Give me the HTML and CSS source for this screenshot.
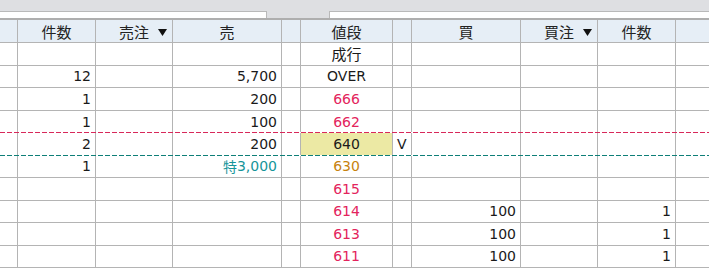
FILE: index.html
```html
<!DOCTYPE html>
<html lang="ja">
<head>
    <meta charset="UTF-8">
    <title>板</title>
    <link rel="stylesheet" href="styles.css">
</head>
<body>
    <div class="toolbar">
        <div class="field field-left"></div>
        <div class="field field-right"></div>
    </div>

    <div class="board">
        <div class="row head">
            <div class="cell"></div>
            <div class="cell center"><span class="jp">件数</span></div>
            <div class="cell center sort"><span class="jp">売注</span><svg class="arrow" width="9" height="7" viewBox="0 0 9 7"><path d="M0 0H9L4.5 7Z" fill="#111"/></svg></div>
            <div class="cell center"><span class="jp">売</span></div>
            <div class="cell"></div>
            <div class="cell center"><span class="jp">値段</span></div>
            <div class="cell"></div>
            <div class="cell center"><span class="jp">買</span></div>
            <div class="cell center sort"><span class="jp">買注</span><svg class="arrow" width="9" height="7" viewBox="0 0 9 7"><path d="M0 0H9L4.5 7Z" fill="#111"/></svg></div>
            <div class="cell center"><span class="jp">件数</span></div>
            <div class="cell"></div>
        </div>

        <div class="row">
            <div class="cell"></div>
            <div class="cell"></div>
            <div class="cell"></div>
            <div class="cell"></div>
            <div class="cell"></div>
            <div class="cell center"><span class="jp">成行</span></div>
            <div class="cell"></div>
            <div class="cell"></div>
            <div class="cell"></div>
            <div class="cell"></div>
            <div class="cell"></div>
        </div>

        <div class="row">
            <div class="cell"></div>
            <div class="cell">12</div>
            <div class="cell"></div>
            <div class="cell">5,700</div>
            <div class="cell"></div>
            <div class="cell center">OVER</div>
            <div class="cell"></div>
            <div class="cell"></div>
            <div class="cell"></div>
            <div class="cell"></div>
            <div class="cell"></div>
        </div>

        <div class="row">
            <div class="cell"></div>
            <div class="cell">1</div>
            <div class="cell"></div>
            <div class="cell">200</div>
            <div class="cell"></div>
            <div class="cell center up">666</div>
            <div class="cell"></div>
            <div class="cell"></div>
            <div class="cell"></div>
            <div class="cell"></div>
            <div class="cell"></div>
        </div>

        <div class="row dashed ask">
            <div class="cell"></div>
            <div class="cell">1</div>
            <div class="cell"></div>
            <div class="cell">100</div>
            <div class="cell"></div>
            <div class="cell center up">662</div>
            <div class="cell"></div>
            <div class="cell"></div>
            <div class="cell"></div>
            <div class="cell"></div>
            <div class="cell"></div>
        </div>

        <div class="row dashed bid">
            <div class="cell"></div>
            <div class="cell">2</div>
            <div class="cell"></div>
            <div class="cell">200</div>
            <div class="cell"></div>
            <div class="cell center current">640</div>
            <div class="cell left">V</div>
            <div class="cell"></div>
            <div class="cell"></div>
            <div class="cell"></div>
            <div class="cell"></div>
        </div>

        <div class="row">
            <div class="cell"></div>
            <div class="cell">1</div>
            <div class="cell"></div>
            <div class="cell special"><span class="jp-small">特</span>3,000</div>
            <div class="cell"></div>
            <div class="cell center base">630</div>
            <div class="cell"></div>
            <div class="cell"></div>
            <div class="cell"></div>
            <div class="cell"></div>
            <div class="cell"></div>
        </div>

        <div class="row">
            <div class="cell"></div>
            <div class="cell"></div>
            <div class="cell"></div>
            <div class="cell"></div>
            <div class="cell"></div>
            <div class="cell center up">615</div>
            <div class="cell"></div>
            <div class="cell"></div>
            <div class="cell"></div>
            <div class="cell"></div>
            <div class="cell"></div>
        </div>

        <div class="row">
            <div class="cell"></div>
            <div class="cell"></div>
            <div class="cell"></div>
            <div class="cell"></div>
            <div class="cell"></div>
            <div class="cell center up">614</div>
            <div class="cell"></div>
            <div class="cell">100</div>
            <div class="cell"></div>
            <div class="cell">1</div>
            <div class="cell"></div>
        </div>

        <div class="row">
            <div class="cell"></div>
            <div class="cell"></div>
            <div class="cell"></div>
            <div class="cell"></div>
            <div class="cell"></div>
            <div class="cell center up">613</div>
            <div class="cell"></div>
            <div class="cell">100</div>
            <div class="cell"></div>
            <div class="cell">1</div>
            <div class="cell"></div>
        </div>

        <div class="row">
            <div class="cell"></div>
            <div class="cell"></div>
            <div class="cell"></div>
            <div class="cell"></div>
            <div class="cell"></div>
            <div class="cell center up">611</div>
            <div class="cell"></div>
            <div class="cell">100</div>
            <div class="cell"></div>
            <div class="cell">1</div>
            <div class="cell"></div>
        </div>
    </div>
</body>
</html>
```

FILE: styles.css
```css
:root {
    --grid-color: #b4b4b4;
    --head-bg: #e6eef6;
    --bar-bg: #dedfe2;
    --text-color: #1a1a1a;
    --up-color: #e3245c;
    --base-color: #c7820e;
    --special-color: #16959a;
    --current-bg: #ece9a4;
}

* {
    margin: 0;
    padding: 0;
    box-sizing: border-box;
}

body {
    background-color: #ffffff;
    color: var(--text-color);
    font-family: 'DejaVu Sans', 'Noto Sans CJK JP', sans-serif;
    font-size: 14px;
    overflow: hidden;
}

.toolbar {
    display: flex;
    height: 18px;
    padding-top: 11px;
    background-color: var(--bar-bg);
}

.field {
    height: 7px;
    background-color: #ffffff;
    border: 1px solid #b9b9b9;
    border-bottom: none;
}

.field-left {
    width: 268px;
    margin-left: -1px;
}

.field-right {
    flex: 1;
    margin-left: 62px;
    margin-right: -1px;
}

.row {
    display: grid;
    grid-template-columns: 18px 78px 77px 109px 19px 92px 19px 109px 77px 78px 1fr;
    height: 22.5px;
    border-bottom: 1px solid var(--grid-color);
}

.row.head {
    height: 25px;
    border-top: 2px solid #aeaeae;
    background-color: var(--head-bg);
}

.cell {
    display: flex;
    align-items: center;
    justify-content: flex-end;
    padding: 0 4px;
    border-right: 1px solid var(--grid-color);
    white-space: nowrap;
}

.cell:last-child {
    border-right: none;
}

.cell.center {
    justify-content: center;
    padding: 0;
}

.cell.left {
    justify-content: flex-start;
}

.jp {
    font-size: 15px;
    font-family: 'Noto Sans CJK JP', sans-serif;
}

.jp-small {
    font-family: 'Noto Sans CJK JP', sans-serif;
    font-size: 14px;
}

.head .cell {
    color: #222222;
}

.sort {
    position: relative;
}

.sort .arrow {
    position: absolute;
    right: 5px;
    top: 9px;
}

.up {
    color: var(--up-color);
}

.base {
    color: var(--base-color);
}

.special {
    color: var(--special-color);
}

.current {
    background-color: var(--current-bg);
}

/* dashed separators around the current price */
.row.dashed {
    position: relative;
    border-bottom: none;
}

.row.dashed::after {
    content: "";
    position: absolute;
    left: 0;
    right: 0;
    bottom: 0;
    height: 1px;
}

.row.ask::after {
    background: repeating-linear-gradient(90deg, #d8285a 0 5px, #ffffff 5px 7px);
}

.row.bid::after {
    background: repeating-linear-gradient(90deg, #0e7f78 0 5px, #ffffff 5px 7px);
}
```
